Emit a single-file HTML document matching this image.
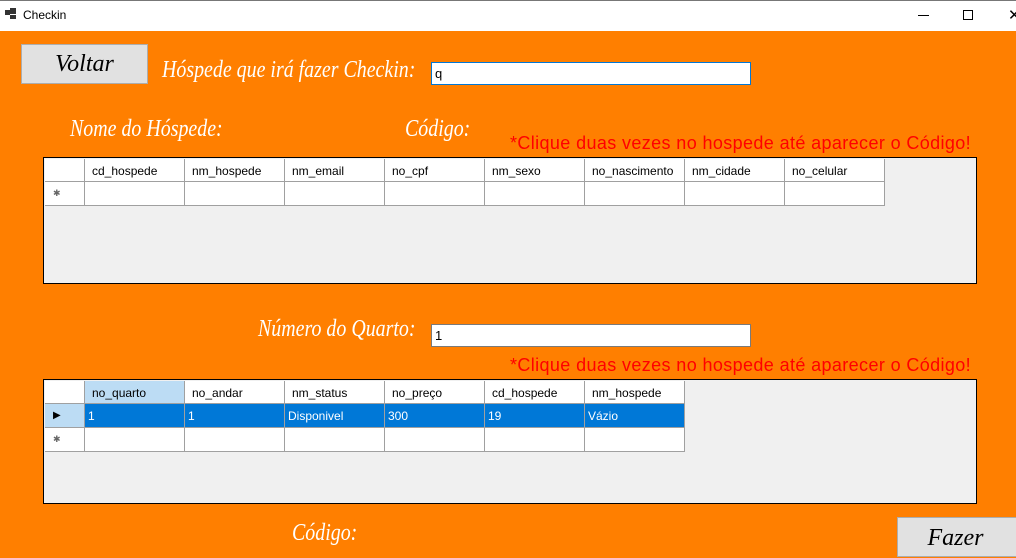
<!DOCTYPE html>
<html><head><meta charset="utf-8"><style>
*{margin:0;padding:0;box-sizing:border-box}
body{width:1016px;height:555px;overflow:hidden;background:#ff7f00;position:relative;font-family:"Liberation Sans",sans-serif}
.a{position:absolute}
.title{left:0;top:0;width:1016px;height:31px;background:#fff;border-top:1px solid #777}
.cur{color:#fff;font-family:"Liberation Serif",serif;font-style:italic;font-size:24px;white-space:nowrap;transform-origin:left center;transform:scaleX(0.83)}
.red{color:#f00;font-size:18px;white-space:nowrap;letter-spacing:0.38px}
.grid{background:#f0f0f0;border:1px solid #000}
.row{position:absolute;left:1px;display:flex;height:24px}
.c{width:100px;border-right:1px solid #a0a0a0;border-bottom:1px solid #a0a0a0;background:#fff;font-size:12px;padding:5px 0 0 7px;color:#000;white-space:nowrap}
.rh{width:40px;border-right:1px solid #a0a0a0;border-bottom:1px solid #a0a0a0;background:#fff;font-size:9px;color:#666;padding:6px 0 0 8px}
.input{background:#fff;border:1px solid #7a7a7a;font-size:13px;padding:3px 3px}
.btn{background:#e1e1e1;border:1px solid #adadad;color:#000;font-family:"Liberation Serif",serif;font-style:italic;font-size:24px;text-align:center}
</style></head><body>
<div class="a title">
 <div class="a" style="left:5px;top:9px;width:5px;height:5px;background:#333"></div>
 <div class="a" style="left:10px;top:7px;width:6px;height:6px;background:#333"></div>
 <div class="a" style="left:10px;top:14px;width:6px;height:4px;background:#333"></div>
 <div class="a" style="left:23px;top:7px;font-size:12px;color:#000">Checkin</div>
 <div class="a" style="left:918px;top:14px;width:11px;height:1px;background:#000"></div>
 <div class="a" style="left:963px;top:9px;width:10px;height:10px;border:1px solid #000"></div>
 <div class="a" style="left:1008px;top:5px;font-size:15px;color:#000">✕</div>
</div>
<div class="a btn" style="left:21px;top:44px;width:127px;height:40px;line-height:38px">Voltar</div>
<div class="a cur" style="left:162px;top:57px">Hóspede que irá fazer Checkin:</div>
<div class="a input" style="left:431px;top:62px;width:320px;height:23px;border-color:#0078d7">q</div>
<div class="a cur" style="left:70px;top:116px">Nome do Hóspede:</div>
<div class="a cur" style="left:405px;top:116px">Código:</div>
<div class="a red" style="left:510px;top:133px">*Clique duas vezes no hospede até aparecer o Código!</div>
<div class="a grid" style="left:43px;top:157px;width:934px;height:127px">
 <div class="row" style="top:1px;height:23px"><div class="rh"></div><div class="c">cd_hospede</div><div class="c">nm_hospede</div><div class="c">nm_email</div><div class="c">no_cpf</div><div class="c">nm_sexo</div><div class="c">no_nascimento</div><div class="c">nm_cidade</div><div class="c">no_celular</div></div>
 <div class="row" style="top:24px"><div class="rh">✱</div><div class="c"></div><div class="c"></div><div class="c"></div><div class="c"></div><div class="c"></div><div class="c"></div><div class="c"></div><div class="c"></div></div>
</div>
<div class="a cur" style="left:258px;top:316px">Número do Quarto:</div>
<div class="a input" style="left:431px;top:324px;width:320px;height:23px">1</div>
<div class="a red" style="left:510px;top:355px">*Clique duas vezes no hospede até aparecer o Código!</div>
<div class="a grid" style="left:43px;top:379px;width:934px;height:125px">
 <div class="row" style="top:1px;height:23px"><div class="rh"></div><div class="c" style="background:#bcdcf4">no_quarto</div><div class="c">no_andar</div><div class="c">nm_status</div><div class="c">no_preço</div><div class="c">cd_hospede</div><div class="c">nm_hospede</div></div>
 <div class="row" style="top:24px"><div class="rh" style="background:#bcdcf4;color:#000;font-size:10px">▶</div><div class="c" style="background:#0078d7;color:#fff;padding-left:3px">1</div><div class="c" style="background:#0078d7;color:#fff;padding-left:3px">1</div><div class="c" style="background:#0078d7;color:#fff;padding-left:3px">Disponivel</div><div class="c" style="background:#0078d7;color:#fff;padding-left:3px">300</div><div class="c" style="background:#0078d7;color:#fff;padding-left:3px">19</div><div class="c" style="background:#0078d7;color:#fff;padding-left:3px">Vázio</div></div>
 <div class="row" style="top:48px"><div class="rh">✱</div><div class="c"></div><div class="c"></div><div class="c"></div><div class="c"></div><div class="c"></div><div class="c"></div></div>
</div>
<div class="a cur" style="left:292px;top:520px">Código:</div>
<div class="a btn" style="left:897px;top:517px;width:125px;height:40px;line-height:40px;padding-right:8px">Fazer</div>
</body></html>
